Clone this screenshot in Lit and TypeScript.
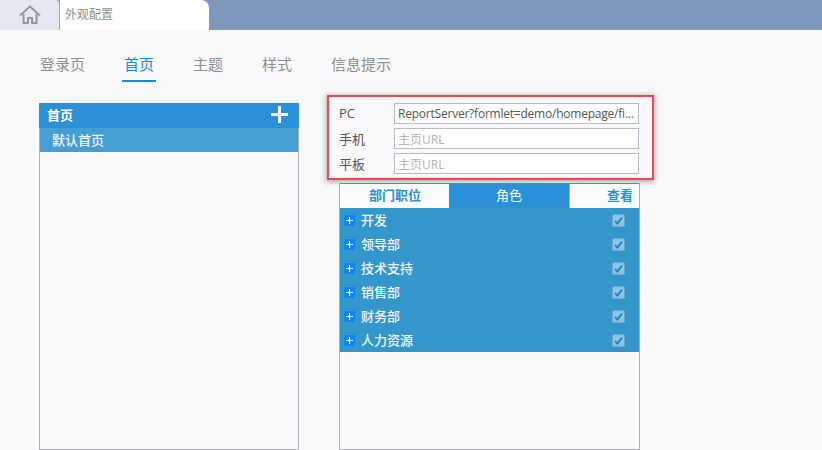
import { LitElement, html, css, svg } from "lit";
import { customElement } from "lit/decorators.js";

const NAV = ["登录页", "首页", "主题", "样式", "信息提示"];
const ROWS = ["开发", "领导部", "技术支持", "销售部", "财务部", "人力资源"];

@customElement("app-root")
export class AppRoot extends LitElement {
  static styles = css`
    :host {
      display: block;
      width: 822px;
      height: 450px;
      overflow: hidden;
      background: #f8f9fb;
      font-family: "Open Sans", "Noto Sans CJK SC", sans-serif;
      color: #666;
    }
    * { box-sizing: border-box; }
    .top {
      height: 30px;
      display: flex;
      background: #7f97bb;
    }
    .home {
      width: 59px;
      background: #e3e8f1;
      display: flex;
      align-items: center;
      justify-content: center;
      border-top-right-radius: 3px;
    }
    .sep { width: 1px; background: #9aa3b3; }
    .doc {
      width: 149px;
      background: #fff;
      border-top-right-radius: 8px;
      padding: 7px 0 0 5px;
      font-size: 12px;
      line-height: 16px;
      color: #8f8f8f;
    }
    .nav {
      display: flex;
      gap: 35px;
      padding: 24px 0 0 38px;
      height: 73px;
    }
    .nav-item {
      height: 28px;
      padding: 0 2px;
      font-size: 15px;
      line-height: 20px;
      color: #8f8f8f;
    }
    .nav-item.on {
      color: #1a87f0;
      border-bottom: 2px solid #1a87f0;
    }
    .main {
      display: flex;
      align-items: flex-start;
      padding-left: 39px;
    }
    .left {
      width: 260px;
      height: 347px;
      border: 1px solid #aeb0b4;
      border-top: 0;
      flex: none;
    }
    .left-head {
      margin: 0 -1px;
      height: 25px;
      background: #2a91d8;
      color: #fff;
      font-size: 13px;
      font-weight: 700;
      line-height: 25px;
      padding: 0 11px 0 8px;
      display: flex;
      justify-content: space-between;
      align-items: center;
    }
    .left-head svg { margin-bottom: 2px; }
    .left-row {
      height: 24px;
      background: #459fd2;
      color: #f0f6fb;
      font-size: 13px;
      font-weight: 500;
      line-height: 24px;
      padding-left: 12px;
    }
    .right {
      margin-left: 28px;
      margin-top: -8px;
      width: 327px;
      flex: none;
    }
    .box {
      height: 85px;
      border: 2px solid #f2474d;
      box-shadow: 0 1px 5px 1px rgba(80, 80, 80, 0.45);
      padding: 6px 0 0 10px;
      display: flex;
      flex-direction: column;
      gap: 5px;
    }
    .field {
      display: flex;
      align-items: center;
      height: 20px;
    }
    .field label {
      width: 55px;
      font-size: 13px;
      color: #555;
    }
    .input {
      width: 245px;
      height: 21px;
      border: 1px solid #b7bacd;
      background: #fff;
      font-size: 12px;
      line-height: 19px;
      padding-left: 3px;
      color: #555;
      white-space: nowrap;
      overflow: hidden;
    }
    .input.val { letter-spacing: -0.22px; }
    .input.ph { color: #b4b4b4; padding-top: 1px; }
    .table {
      margin: 3px 0 0 12px;
      width: 301px;
      height: 267px;
      border: 1px solid #aeb0b4;
      border-top: 0;
    }
    .tabs {
      display: flex;
      height: 25px;
      font-size: 13px;
      line-height: 22px;
      text-align: center;
    }
    .tab {
      color: #2a91d8;
      font-weight: 700;
      background: #fbfcfd;
      border-top: 1px solid #5b8db0;
    }
    .tab.a { width: 109px; padding-left: 1px; }
    .tab.b {
      width: 120px;
      background: #2a91d8;
      color: #fff;
      font-weight: 400;
      border-bottom: 1px solid #4f87b0;
    }
    .tab.c { width: 70px; text-align: right; padding-right: 6px; border-left: 1px solid #9fb2c2; }
    .row {
      display: flex;
      align-items: center;
      height: 24px;
      background: #3497cc;
      color: #f2f7fb;
      font-size: 13px;
      font-weight: 500;
      padding-left: 4px;
    }
    .plus {
      width: 11px;
      height: 11px;
      background: #0a84f8;
      border-radius: 2px;
      margin-right: 6px;
      flex: none;
      display: block;
    }
    .name { flex: 1; line-height: 24px; height: 24px; }
    .check {
      width: 13px;
      height: 13px;
      margin-right: 14px;
      display: block;
      flex: none;
    }
  `;

  render() {
    return html`
      <div class="top">
        <div class="home">
          <svg width="22" height="20" viewBox="0 0 22 20" fill="none" stroke="#96989c" stroke-width="2">
            <path d="M1 10.5 11 1.5 21 10.5" />
            <path d="M4.5 9v9h4.5v-5h4v5h4.5V9" />
          </svg>
        </div>
        <div class="sep"></div>
        <div class="doc">外观配置</div>
      </div>
      <div class="nav">
        ${NAV.map((n, i) => html`<div class="nav-item ${i === 1 ? "on" : ""}">${n}</div>`)}
      </div>
      <div class="main">
        <div class="left">
          <div class="left-head">
            <span>首页</span>
            <svg width="17" height="17" viewBox="0 0 17 17"><path d="M8.5 0v17M0 8.5h17" stroke="#fff" stroke-width="3" /></svg>
          </div>
          <div class="left-row">默认首页</div>
        </div>
        <div class="right">
          <div class="box">
            <div class="field"><label>PC</label><div class="input val">ReportServer?formlet=demo/homepage/fi...</div></div>
            <div class="field"><label>手机</label><div class="input ph">主页URL</div></div>
            <div class="field"><label>平板</label><div class="input ph">主页URL</div></div>
          </div>
          <div class="table">
            <div class="tabs">
              <div class="tab a">部门职位</div>
              <div class="tab b">角色</div>
              <div class="tab c">查看</div>
            </div>
            ${ROWS.map(
              (r) => html`<div class="row">
                <svg class="plus" viewBox="0 0 11 11"><path d="M5.5 2v7M2 5.5h7" stroke="#fff" stroke-width="1.2" /></svg>
                <span class="name">${r}</span>
                <svg class="check" viewBox="0 0 13 13">
                  <rect x=".5" y=".5" width="12" height="12" rx="1.5" fill="#8cc4e6" stroke="#6da9cd" />
                  ${svg`<path d="M3 7l2.5 2.5L10 3.5" fill="none" stroke="#1f86d8" stroke-width="2" />`}
                </svg>
              </div>`
            )}
          </div>
        </div>
      </div>
    `;
  }
}
